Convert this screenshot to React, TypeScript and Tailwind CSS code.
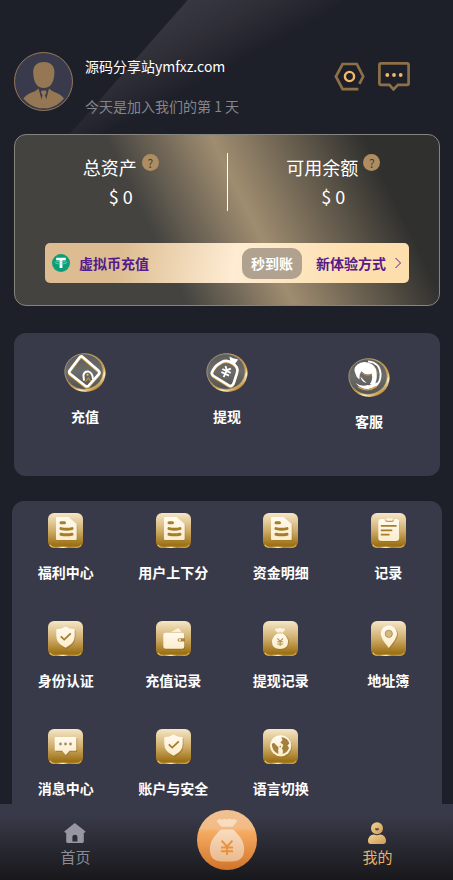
import type { ReactNode } from 'react';

// Gradients shared by every icon on the page.
function IconDefs() {
  return (
    <svg className="absolute size-0" aria-hidden>
      <defs>
        <linearGradient id="tile" x1="0" y1="0" x2="0" y2="1">
          <stop offset="0" stopColor="#f6e6c6" />
          <stop offset="0.5" stopColor="#cfae6c" />
          <stop offset="0.92" stopColor="#9c7014" />
          <stop offset="1" stopColor="#a67a1c" />
        </linearGradient>
        <linearGradient id="shine" x1="0" y1="0" x2="1" y2="0">
          <stop offset="0" stopColor="#f3d491" />
          <stop offset="0.2" stopColor="#c08a22" />
          <stop offset="0.42" stopColor="#fff3d2" />
          <stop offset="0.6" stopColor="#b8841e" />
          <stop offset="1" stopColor="#d3ab58" />
        </linearGradient>
        <linearGradient id="cream" x1="0" y1="0" x2="0" y2="1">
          <stop offset="0" stopColor="#fffaf0" />
          <stop offset="1" stopColor="#fbeccb" />
        </linearGradient>
        <linearGradient id="rim" x1="0" y1="0" x2="0.7" y2="1">
          <stop offset="0" stopColor="#b5a680" />
          <stop offset="0.45" stopColor="#b98f3c" />
          <stop offset="0.7" stopColor="#d8a13a" />
          <stop offset="0.82" stopColor="#fff0c4" />
          <stop offset="1" stopColor="#b07a1c" />
        </linearGradient>
        <linearGradient id="face" x1="0" y1="0" x2="0" y2="1">
          <stop offset="0" stopColor="#5c5d5c" />
          <stop offset="0.5" stopColor="#6c6d6b" />
          <stop offset="1" stopColor="#525352" />
        </linearGradient>
        <linearGradient id="orange" x1="0" y1="0" x2="0" y2="1">
          <stop offset="0" stopColor="#f0c193" />
          <stop offset="0.3" stopColor="#f3bb84" />
          <stop offset="0.36" stopColor="#f5ab62" />
          <stop offset="1" stopColor="#d2742a" />
        </linearGradient>
        <linearGradient id="bag" x1="0" y1="0" x2="0" y2="1">
          <stop offset="0" stopColor="#f8dcc0" />
          <stop offset="1" stopColor="#eab98d" />
        </linearGradient>
        <linearGradient id="person" x1="0" y1="0" x2="1" y2="1">
          <stop offset="0" stopColor="#f3d596" />
          <stop offset="1" stopColor="#cf9a55" />
        </linearGradient>
      </defs>
    </svg>
  );
}

function Tile({ children }: { children: ReactNode }) {
  return (
    <svg viewBox="0 0 35 35" className="size-[35px]" aria-hidden>
      <rect width="35" height="35" rx="6" fill="url(#tile)" />
      <path d="M1.8 31.8 Q3.2 34.4 6 34.4 H29 Q31.8 34.4 33.2 31.8" fill="none" stroke="url(#shine)" strokeWidth="1.1" />
      {children}
    </svg>
  );
}

const ink = '#a67d2a';

function DocIcon() {
  return (
    <Tile>
      <path d="M9.5 5 H21 L29.5 12 V27 Q29.5 28 28.5 28 H9.5 Z" fill="#8f6a1c" opacity="0.3" />
      <path d="M9 4 H20.5 L28.7 11 V26 Q28.7 27 27.7 27 H9 Q8 27 8 26 V5 Q8 4 9 4 Z" fill="url(#cream)" />
      <path d="M13 9.8 H16.5 M13 15.6 Q18.5 16.8 24 15.6 M13 21.3 Q18.5 22.4 24 21.3" fill="none" stroke={ink} strokeWidth="3" strokeLinecap="round" />
    </Tile>
  );
}

function ClipboardIcon() {
  return (
    <Tile>
      <rect x="8" y="7.4" width="21" height="21.6" rx="3.5" fill="#8f6a1c" opacity="0.5" />
      <path d="M10.5 6 H13.5 Q14 9 16 9 H21 Q23 9 23.5 6 H25 Q28.3 6 28.3 9 V25 Q28.3 28 25 28 H10.5 Q7.3 28 7.3 25 V9 Q7.3 6 10.5 6 Z" fill="url(#cream)" />
      <path d="M15 5.6 H22 L21.2 7.8 H15.8 Z" fill="url(#cream)" />
      <path d="M9.8 12.8 H25.6 M9.8 17.3 H21.3 M9.8 21.6 H18.5" stroke={ink} strokeWidth="1.8" />
    </Tile>
  );
}

function ShieldIcon() {
  return (
    <Tile>
      <path d="M18.3 6.8 Q22 9.4 27.5 9.2 V16 Q27.5 23.6 18.3 28.2 Q9.3 23.6 9.3 16 V9.2 Q14 9.4 18.3 6.8 Z" fill="#8f6a1c" opacity="0.5" />
      <path d="M17.5 5.6 Q21 8.2 26.7 8.2 V15 Q26.7 22.4 17.5 26.8 Q8.3 22.4 8.3 15 V8.2 Q14 8.2 17.5 5.6 Z" fill="url(#cream)" />
      <path d="M12.8 15.4 L16.2 18.6 L22.8 12.4" fill="none" stroke={ink} strokeWidth="1.8" />
    </Tile>
  );
}

function WalletIcon() {
  return (
    <Tile>
      <rect x="8" y="12.6" width="21" height="16.4" rx="2.5" fill="#8f6a1c" opacity="0.5" />
      <path d="M15 11 L21.6 7.4 Q22.6 7.2 23.2 8 L25.4 11 Z" fill="url(#cream)" />
      <path d="M9.8 11.8 H26 Q28.3 11.8 28.3 14 V17.2 H23.4 Q21.6 17.2 21.6 18.9 Q21.6 20.6 23.4 20.6 H28.3 V25.4 Q28.3 27.8 26 27.8 H9.8 Q7.3 27.8 7.3 25.4 V14 Q7.3 11.8 9.8 11.8 Z" fill="url(#cream)" />
      <circle cx="23.8" cy="18.9" r="1.1" fill="#fbeccb" />
    </Tile>
  );
}

function MoneyBagIcon() {
  return (
    <Tile>
      <circle cx="18" cy="20.8" r="8" fill="#8f6a1c" opacity="0.5" />
      <path d="M11.8 8.6 Q13.2 6.8 14.8 7.8 Q17 6.4 19.2 7.8 Q21 6.8 22.2 8.6 L19.8 11.4 H14.2 Z" fill="url(#cream)" />
      <path d="M14.4 12.6 H19.8 Q25 16 25 21 Q25 28 17 28 Q9 28 9 21 Q9 16 14.4 12.6 Z" fill="url(#cream)" />
      <path d="M14.4 17.4 L17.2 20.4 L20 17.4 M17.2 20.4 V25 M14.2 20.8 H20.2 M14.2 23 H20.2" fill="none" stroke="#b99347" strokeWidth="1.1" />
    </Tile>
  );
}

function PinIcon() {
  return (
    <Tile>
      <path d="M18.6 28 Q10.6 18 10.6 13.4 A8 8 0 0 1 27 13.4 Q27 18 18.6 28 Z" fill="#8f6a1c" opacity="0.5" />
      <path d="M17.8 27 Q9.7 17.6 9.7 12.6 A8.1 8.1 0 0 1 26 12.6 Q26 17.6 17.8 27 Z" fill="url(#cream)" />
      <circle cx="17.8" cy="12.8" r="3.6" fill="#d3b985" stroke="#b08c44" strokeWidth="0.9" />
    </Tile>
  );
}

function ChatTileIcon() {
  return (
    <Tile>
      <path d="M8 9.4 H29.2 V23 H22 L18.5 27 L15 23 H8 Z" fill="#8f6a1c" opacity="0.5" />
      <path d="M7.7 8 H27.3 Q28.3 8 28.3 9 V20.8 Q28.3 21.8 27.3 21.8 H21.5 L17.8 26 L14 21.8 H7.7 Q6.7 21.8 6.7 20.8 V9 Q6.7 8 7.7 8 Z" fill="url(#cream)" />
      <g fill="#a88d5c">
        <circle cx="12.5" cy="15" r="1.4" />
        <circle cx="17.5" cy="15" r="1.4" />
        <circle cx="22.5" cy="15" r="1.4" />
      </g>
    </Tile>
  );
}

function GlobeIcon() {
  return (
    <Tile>
      <circle cx="18.4" cy="17.8" r="10.6" fill="#8f6a1c" opacity="0.5" />
      <circle cx="17.7" cy="16.8" r="10.6" fill="url(#cream)" />
      <path d="M8.8 15 Q11.5 12.6 12.6 15.6 L15.6 18.6 Q14.8 21 15.4 25 Q9 22.6 8.8 15 Z" fill="#a3813c" />
      <path d="M18.2 8.2 Q24.8 8.6 26.4 14.4 L24.4 16.4 L26 18.8 Q24.6 23.6 19.6 25 Q20.6 21.2 18.8 19.4 L20.4 16 L17.4 13.6 L19.6 11 Z" fill="#a3813c" />
      <path d="M16 17.4 L18.2 16.4 L17.6 18.6 Z" fill="#a3813c" />
    </Tile>
  );
}

function Coin({ children }: { children: ReactNode }) {
  return (
    <>
      <ellipse cx="21.4" cy="19.8" rx="20.2" ry="19.2" fill="url(#rim)" />
      <ellipse cx="20" cy="18.6" rx="19.2" ry="17.8" fill="url(#face)" stroke="#c2ab78" strokeWidth="0.7" />
      {children}
    </>
  );
}

function RechargeCoin() {
  const outline = 'M15.6 4.4 Q17.3 2.6 19 4.2 L34.6 17.8 Q36.2 19.4 34.8 21.2 L24.6 32.6 Q23 34.2 21.2 32.8 L6 20.8 Q4.4 19.2 5.8 17.4 Z';
  return (
    <svg viewBox="0 0 42 39" className="h-[39px] w-[42px]" aria-hidden>
      <Coin>
        <path d={outline} fill="none" stroke="#c98f2c" strokeWidth="2.2" transform="translate(0 1.4)" />
        <path d={outline} fill="none" stroke="#fff" strokeWidth="2.6" />
        <path d="M20 27.6 L19.4 22 Q20.6 17.8 24.6 18.6 Q28.8 20 29 26.4" fill="none" stroke="#fff" strokeWidth="2" />
        <path d="M21.6 28.6 L24.2 25 L26.8 28.4" fill="none" stroke="#c98f2c" strokeWidth="1.2" />
        <circle cx="23.6" cy="21.8" r="1" fill="#f4c66a" />
      </Coin>
    </svg>
  );
}

function WithdrawCoin() {
  const outline = 'M15.4 9.2 Q21 6.2 26.6 10.2 Q33 14.4 31 19.8 L27.6 30.4 Q25.8 34.2 22.4 32.2 L7.2 22.8 Q4.8 20.8 6.4 18.2 Q9.6 11.8 15.4 9.2 Z';
  return (
    <svg viewBox="0 0 42 39" className="h-[39px] w-[42px]" aria-hidden>
      <Coin>
        <path d={outline} fill="none" stroke="#c98f2c" strokeWidth="2.2" transform="translate(0 1.2)" />
        <path d={outline} fill="none" stroke="#fff" strokeWidth="2.6" />
        <path d="M23.4 3.4 L27 5.2 L32.2 6.4 L29 10.8 L24.4 8.4 Z" fill="#fff" />
        <g transform="rotate(25 20 19)" stroke="#fff" strokeWidth="1.8" fill="none">
          <path d="M17 13.8 L20 17 L23 13.8 M20 16.6 V24.6 M15.4 17.8 H24.6 M15.8 21 H24.2" />
        </g>
      </Coin>
    </svg>
  );
}

// The support coin is a taller drawing with blank space above the rim.
function SupportCoin() {
  return (
    <svg viewBox="0 -5 42 44" className="h-11 w-[42px]" aria-hidden>
      <Coin>
        <path d="M20 3.4 Q31.8 4.4 32.6 16 Q32.8 24.6 26.8 28.6" fill="none" stroke="#fff" strokeWidth="1.9" />
        <path d="M20 6.4 Q28.8 7.4 29.4 16" fill="none" stroke="#c98f2c" strokeWidth="1" />
        <path d="M7.4 15.4 Q4.8 10.6 9.4 6.6 Q14 2.6 20.6 4.8 Q27.6 6.6 28.6 14.4 Q29.6 21.4 26.4 27.4 L21.6 26.2 Q25.4 21.8 23.6 15.4 Q18 18.2 13.2 13.2 Q11 17 11.4 21.4 Q8 19 7.4 15.4 Z" fill="#fff" />
        <path d="M13.2 14.4 Q18 19 23.6 16.4" fill="none" stroke="#c98f2c" strokeWidth="0.9" />
        <path d="M12.4 18.6 Q13.6 24.6 18.6 25 L15.4 21.8 Z" fill="#fff" />
        <path d="M7.6 25 Q13.6 29.2 19.6 27 Q24.6 27.8 29.6 24 Q27.6 30.2 20.4 31 Q12.6 31.4 7.6 25 Z" fill="#fff" />
        <path d="M10 29 Q19.6 35 28.6 28.4" fill="none" stroke="#d9a13a" strokeWidth="1.4" />
      </Coin>
    </svg>
  );
}

function Avatar() {
  return (
    <svg viewBox="0 0 59 59" className="size-[59px] shrink-0" role="img" aria-label="头像">
      <circle cx="29.5" cy="29.5" r="29" fill="#393a4b" stroke="#98795a" />
      <g fill="#957853">
        <path d="M29.8 10 Q40.8 10.4 40.4 21 Q39.6 36 29.8 36 Q20 36 19.2 21 Q18.8 10.4 29.8 10 Z" />
        <path d="M9.4 46.6 Q12 42.4 18.4 40.2 Q22.6 38.8 24.6 36.6 L29.2 54 L25.6 56.2 Q15.6 54.4 9.4 46.6 Z" />
        <path d="M50 46.6 Q47.4 42.4 41 40.2 Q37 38.8 35 36.6 L30.4 54 L33.8 56.2 Q43.8 54.4 50 46.6 Z" />
        <path d="M25 53 H35 L34 56.2 H26 Z" />
        <path d="M27.6 38.4 H32 L32.6 40.8 L31 43 L33 50 L29.8 54 L26.6 50 L28.6 43 L27 40.8 Z" />
      </g>
    </svg>
  );
}

function SettingsIcon() {
  return (
    <svg viewBox="0 0 31 29" className="h-[29px] w-[31px]" fill="none" aria-hidden>
      <path d="M24.4 27.2 H8.6 L1.9 14.5 L8.6 2 H22.8 L29.2 14.5 L25.4 21.8" stroke="#8d7048" strokeWidth="2.7" />
      <circle cx="15.5" cy="14.5" r="4.6" stroke="#f3b96b" strokeWidth="2.4" />
    </svg>
  );
}

function MessageIcon() {
  return (
    <svg viewBox="0 0 32 29" className="h-[29px] w-8" fill="none" aria-hidden>
      <path d="M3 1.4 H29 Q30.6 1.4 30.6 3 V21.2 Q30.6 22.8 29 22.8 H20 L15.5 27.4 L11.4 22.8 H3 Q1.4 22.8 1.4 21.2 V3 Q1.4 1.4 3 1.4 Z" stroke="#8d7048" strokeWidth="2.7" />
      <g fill="#f3b96b">
        <circle cx="9.3" cy="13" r="1.9" />
        <circle cx="16" cy="13" r="1.9" />
        <circle cx="22.7" cy="13" r="1.9" />
      </g>
    </svg>
  );
}

function TetherIcon() {
  return (
    <svg viewBox="0 0 18 18" className="size-[18px]" aria-hidden>
      <circle cx="9" cy="9" r="9" fill="#0a9f78" />
      <path d="M4.2 3.8 H13.8 V6.2 H10.4 V14 H7.6 V6.2 H4.2 Z" fill="#fff" />
      <ellipse cx="9" cy="8.6" rx="5.8" ry="1.3" fill="none" stroke="#8fd3c1" strokeWidth="0.7" />
    </svg>
  );
}

function HomeIcon() {
  return (
    <svg viewBox="0 0 24 24" className="size-6" aria-hidden>
      <path d="M11.8 2 L22.6 10.4 L21.6 11.8 H20.8 V20.6 Q20.8 22 19.4 22 H4.6 Q3.2 22 3.2 20.6 V11.8 H2.2 L1.2 10.4 Z" fill="#9796a2" />
      <path d="M9.4 20.6 V15.8 Q9.4 13.8 11.9 13.8 Q14.4 13.8 14.4 15.8 V20.6 Z" fill="#2d2d38" />
    </svg>
  );
}

function PersonIcon() {
  return (
    <svg viewBox="0 0 24 24" className="size-6" aria-hidden>
      <circle cx="12" cy="7.2" r="6" fill="url(#person)" />
      <path d="M10 7.2 H14 Q14 9.6 12 9.6 Q10 9.6 10 7.2 Z" fill="#5b4a38" />
      <path d="M3 20.6 Q3 13.6 9 13.4 Q12 15 15 13.4 Q21 13.6 21 20.6 Q21 23 18.6 23 H5.4 Q3 23 3 20.6 Z" fill="url(#person)" />
    </svg>
  );
}

function TradeIcon() {
  return (
    <svg viewBox="0 0 60 60" className="size-15" aria-hidden>
      <circle cx="30" cy="30" r="30" fill="url(#orange)" />
      <path d="M19.6 11.2 Q22.4 7.8 25 9.8 Q27.4 7.8 30 9.6 Q32.6 7.8 35 9.8 Q37.6 7.8 40.4 11.2 L35.6 16.8 H24.4 Z" fill="#f8dcc0" />
      <path d="M24 19.6 H36 Q38 20.8 40 23.6 Q47.2 30.6 47.2 39.6 Q47 51.6 34.6 51.6 H25.4 Q13 51.6 12.8 39.6 Q12.8 30.6 20 23.6 Q22 20.8 24 19.6 Z" fill="url(#bag)" />
      <path d="M24.6 30.6 L30 36.6 L35.4 30.6 M30 36.6 V45 M24 37.4 H36 M24 41.2 H36" fill="none" stroke="#e8913f" strokeWidth="2" />
    </svg>
  );
}

const quickActions = [
  { label: '充值', icon: <RechargeCoin /> },
  { label: '提现', icon: <WithdrawCoin /> },
  { label: '客服', icon: <SupportCoin /> },
];

const menuItems = [
  { label: '福利中心', icon: <DocIcon /> },
  { label: '用户上下分', icon: <DocIcon /> },
  { label: '资金明细', icon: <DocIcon /> },
  { label: '记录', icon: <ClipboardIcon /> },
  { label: '身份认证', icon: <ShieldIcon /> },
  { label: '充值记录', icon: <WalletIcon /> },
  { label: '提现记录', icon: <MoneyBagIcon /> },
  { label: '地址簿', icon: <PinIcon /> },
  { label: '消息中心', icon: <ChatTileIcon /> },
  { label: '账户与安全', icon: <ShieldIcon /> },
  { label: '语言切换', icon: <GlobeIcon /> },
];

function Balance({ label, value }: { label: string; value: string }) {
  return (
    <div className="flex-1 text-center text-lg text-white">
      <div className="flex items-start justify-center gap-[5px] leading-7">
        <span>{label}</span>
        <button
          type="button"
          aria-label={`${label}说明`}
          className="mt-px flex size-[17px] items-center justify-center rounded-full bg-[#ad8d61] text-xs leading-none text-[#4a3d2c]"
        >
          ?
        </button>
      </div>
      <div className="leading-[30px]">{value}</div>
    </div>
  );
}

function ActionLink({ label, icon }: { label: string; icon: ReactNode }) {
  return (
    <a href="#" className="flex flex-col items-center gap-[14px] text-sm leading-5 font-bold text-white">
      {icon}
      <span>{label}</span>
    </a>
  );
}

export default function App() {
  return (
    <div className="min-h-screen bg-[#1e2029] font-['Noto_Sans_CJK_SC',sans-serif]">
      <IconDefs />

      <header className="relative flex items-start px-[14px] pt-[52px]">
        {/* Diagonal light beam behind the profile row */}
        <div
          className="absolute top-0 left-[47px] h-40 w-[293px] bg-linear-to-br from-[#383b45] from-20% via-[#2f2e37] via-38% to-[#1e2029] to-52% [clip-path:polygon(48%_0,100%_0,100%_10%,0_100%)]"
          aria-hidden
        />
        <div className="relative flex grow items-start gap-3">
          <Avatar />
          <div className="flex flex-col gap-5 pt-1 text-sm leading-5">
            <h1 className="text-white">源码分享站ymfxz.com</h1>
            <p className="text-[#85868c]">今天是加入我们的第 1 天</p>
          </div>
          <div className="ml-auto flex gap-[13px] pt-[10px] pr-[29px]">
            <button type="button" aria-label="设置">
              <SettingsIcon />
            </button>
            <button type="button" aria-label="消息">
              <MessageIcon />
            </button>
          </div>
        </div>
      </header>

      <main className="pb-4">
        <section className="relative mt-[18px] mr-[13px] ml-[14px] rounded-xl border border-[#85847f] bg-[linear-gradient(64deg,#444340_34%,#a08d70_55%,#30302e_85%)] px-[30px] pt-[18px] pb-[22px]">
          <div className="-mx-[30px] flex">
            <Balance label="总资产" value="$ 0" />
            <div className="w-px bg-white" />
            <Balance label="可用余额" value="$ 0" />
          </div>
          <a
            href="#"
            className="mt-8 flex h-10 items-center rounded-[5px] bg-[linear-gradient(100deg,#dcbc90_20%,#feecd3_52%,#fddfad_85%)] px-[7px] text-sm font-bold text-[#551a8b]"
          >
            <TetherIcon />
            <span className="ml-[9px]">虚拟币充值</span>
            <span className="ml-auto rounded-[10px] bg-[#b0a28f] px-[9px] leading-[31px] text-white">秒到账</span>
            <span className="ml-[14px]">新体验方式</span>
            <svg viewBox="0 0 8 12" className="ml-2 h-3 w-2" fill="none" stroke="#551a8b" aria-hidden>
              <path d="M1.5 1 L6.5 6 L1.5 11" />
            </svg>
          </a>
        </section>

        <section className="mt-[27px] mr-[13px] ml-[14px] grid grid-cols-3 items-start rounded-xl bg-[#393a49] pt-5 pb-[45px]">
          {quickActions.map((item) => (
            <ActionLink key={item.label} {...item} />
          ))}
        </section>

        <section className="mt-[25px] mr-[11px] ml-3 grid grid-cols-4 gap-y-[39px] rounded-xl bg-[#393a49] pt-3 pb-8">
          {menuItems.map((item) => (
            <ActionLink key={item.label} {...item} />
          ))}
        </section>
      </main>

      <nav className="fixed inset-x-0 bottom-0 grid h-[76px] grid-cols-3 justify-items-center bg-linear-to-b from-[#393a49] from-15% to-[#18181b] text-[15px] leading-6">
        <a href="#" className="flex flex-col items-center pt-[17px] text-[#8d8c94]">
          <HomeIcon />
          首页
        </a>
        <a href="#" aria-label="交易" className="pt-[6px]">
          <TradeIcon />
        </a>
        <a href="#" className="flex flex-col items-center pt-[17px] text-[#e9b266]">
          <PersonIcon />
          我的
        </a>
      </nav>
    </div>
  );
}
